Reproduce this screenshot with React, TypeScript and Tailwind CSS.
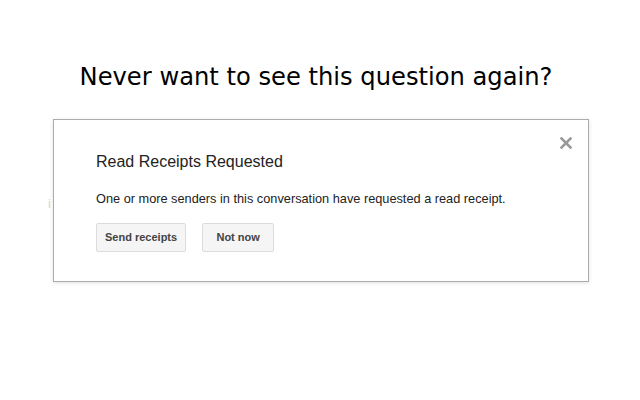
export default function App() {
  return (
    <div className="relative h-[400px] w-[640px] overflow-hidden bg-white">
      <h1 className="mt-[63px] pr-[8px] text-center font-['DejaVu_Sans',sans-serif] text-[24.2px] leading-[28px] font-normal text-black">
        Never want to see this question again?
      </h1>

      {/* a bit of the page underneath peeks out next to the dialog */}
      <span className="absolute top-[194px] left-[48px] font-['Liberation_Sans',sans-serif] text-[13px] text-[#d6d6d6]">
        i
      </span>

      <div className="relative mt-[28px] ml-[53px] w-[536px] border border-[#acacac] bg-white px-[42px] pt-[32px] pb-[29px] font-['Liberation_Sans',Arial,sans-serif] shadow-[0_1px_4px_rgba(0,0,0,0.12)]">
        <button className="absolute top-[16px] right-[16px] flex h-[13px] w-[13px] items-center justify-center">
          <svg width="12" height="12" viewBox="0 0 12 12">
            <path
              d="M1.5 1.5L10.5 10.5M10.5 1.5L1.5 10.5"
              stroke="#999"
              strokeWidth="2.6"
              strokeLinecap="square"
            />
          </svg>
        </button>

        <h2 className="text-[16px] leading-[20px] font-normal text-[#222]">
          Read Receipts Requested
        </h2>
        <p className="mt-[19px] text-[12.75px] leading-[16px] text-[#222]">
          One or more senders in this conversation have requested a read
          receipt.
        </p>

        <div className="mt-[16px] flex gap-[16px]">
          <button className="h-[29px] min-w-[72px] rounded-[2px] border border-[#dcdcdc] bg-[#f5f5f5] px-[8px] text-[11px] leading-[27px] font-bold text-[#444]">
            Send receipts
          </button>
          <button className="h-[29px] min-w-[72px] rounded-[2px] border border-[#dcdcdc] bg-[#f5f5f5] px-[8px] text-[11px] leading-[27px] font-bold text-[#444]">
            Not now
          </button>
        </div>
      </div>
    </div>
  );
}
